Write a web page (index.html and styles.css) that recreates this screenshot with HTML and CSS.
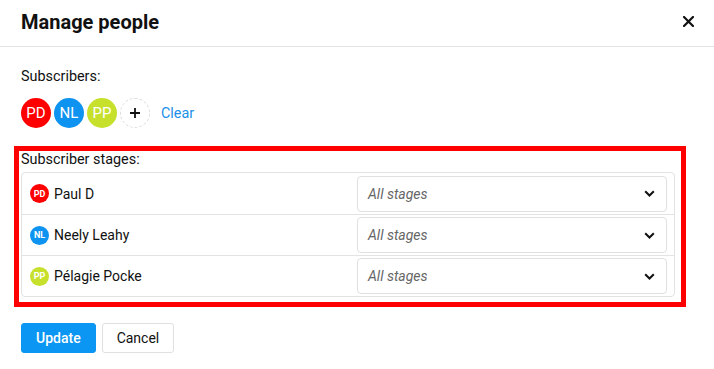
FILE: index.html
```html
<!DOCTYPE html>
<html lang="en">
<head>
    <meta charset="UTF-8">
    <meta name="viewport" content="width=device-width, initial-scale=1.0">
    <title>Manage people</title>
    <link rel="stylesheet" href="styles.css">
</head>
<body>
    <div class="modal">
        <div class="modal-header">
            <h1>Manage people</h1>
            <button class="close" aria-label="Close">
                <svg width="11" height="11" viewBox="0 0 11 11"><path d="M1 1L10 10M10 1L1 10" stroke="#111" stroke-width="2.2" stroke-linecap="square"/></svg>
            </button>
        </div>
        <div class="modal-body">
            <div class="field-label">Subscribers:</div>
            <div class="subscribers">
                <span class="avatar red">PD</span>
                <span class="avatar blue">NL</span>
                <span class="avatar green">PP</span>
                <span class="avatar add">
                    <svg width="12" height="12" viewBox="0 0 12 12"><path d="M6 1V11M1 6H11" stroke="#111" stroke-width="1.8"/></svg>
                </span>
                <a class="clear" href="#">Clear</a>
            </div>
            <div class="stages">
                <div class="stages-label">Subscriber stages:</div>
                <div class="stage-table">
                    <div class="stage-row">
                        <div class="person"><span class="avatar small red">PD</span>Paul D</div>
                        <div class="select">
                            <span>All stages</span>
                            <svg width="11" height="7" viewBox="0 0 11 7"><path d="M1.2 1.2L5.5 5.5L9.8 1.2" fill="none" stroke="#111" stroke-width="2"/></svg>
                        </div>
                    </div>
                    <div class="stage-row">
                        <div class="person"><span class="avatar small blue">NL</span>Neely Leahy</div>
                        <div class="select">
                            <span>All stages</span>
                            <svg width="11" height="7" viewBox="0 0 11 7"><path d="M1.2 1.2L5.5 5.5L9.8 1.2" fill="none" stroke="#111" stroke-width="2"/></svg>
                        </div>
                    </div>
                    <div class="stage-row">
                        <div class="person"><span class="avatar small green">PP</span>Pélagie Pocke</div>
                        <div class="select">
                            <span>All stages</span>
                            <svg width="11" height="7" viewBox="0 0 11 7"><path d="M1.2 1.2L5.5 5.5L9.8 1.2" fill="none" stroke="#111" stroke-width="2"/></svg>
                        </div>
                    </div>
                </div>
            </div>
            <div class="actions">
                <button class="btn primary">Update</button>
                <button class="btn">Cancel</button>
            </div>
        </div>
    </div>
</body>
</html>
```

FILE: styles.css
```css
body {
    margin: 0;
    font-family: Roboto, "Liberation Sans", sans-serif;
    font-size: 14px;
    color: #111;
    background: #fff;
}
.modal-header {
    height: 47px;
    border-bottom: 1px solid #e3e3e3;
    display: flex;
    align-items: center;
    justify-content: space-between;
    padding: 0 20px 0 21px;
    box-sizing: border-box;
}
.modal-header h1 {
    margin: 0;
    font-size: 20px;
    font-weight: 700;
    padding-bottom: 2px;
}
.close {
    border: none;
    background: none;
    padding: 0;
    width: 11px;
    height: 11px;
    margin-bottom: 3px;
    cursor: pointer;
}
.close svg {
    display: block;
}
.modal-body {
    padding: 21px 28px 0 14px;
}
.field-label {
    padding-left: 7px;
    line-height: 18px;
    font-size: 14.4px;
}
.subscribers {
    display: flex;
    align-items: center;
    gap: 3px;
    margin-top: 12px;
    padding-left: 7px;
}
.avatar {
    width: 30px;
    height: 30px;
    border-radius: 50%;
    display: inline-flex;
    align-items: center;
    justify-content: center;
    color: #fff;
    font-size: 15px;
    flex-shrink: 0;
}
.avatar.red { background: #fe0000; }
.avatar.blue { background: #0f93f0; }
.avatar.green { background: #c7e02c; }
.avatar.add {
    border: 1px dashed #dcdcdc;
    box-sizing: border-box;
}
.clear {
    color: #1a90e8;
    text-decoration: none;
    margin-left: 8px;
    font-size: 14.4px;
}
.stages {
    margin-top: 18px;
    border: 5px solid #ff0000;
    padding: 0 6px 5px 2px;
}
.stages-label {
    line-height: 17px;
    margin-bottom: 4px;
    font-size: 14.4px;
}
.stage-table {
    border: 1px solid #e3e3e3;
    border-radius: 4px;
}
.stage-row {
    display: flex;
    align-items: center;
    justify-content: space-between;
    height: 41px;
    padding: 0 7px 0 8px;
    box-sizing: border-box;
}
.stage-row + .stage-row {
    border-top: 1px solid #e3e3e3;
}
.person {
    display: flex;
    align-items: center;
    gap: 5px;
}
.avatar.small {
    width: 19px;
    height: 19px;
    font-size: 9px;
    font-weight: 700;
}
.select {
    width: 310px;
    height: 36px;
    border: 1px solid #e0e0e0;
    border-radius: 4px;
    box-sizing: border-box;
    display: flex;
    align-items: center;
    justify-content: space-between;
    padding: 0 11px 0 10px;
    color: #666;
    font-style: italic;
}
.select svg {
    display: block;
}
.actions {
    display: flex;
    gap: 6px;
    margin-top: 16px;
    padding-left: 7px;
}
.btn {
    height: 30px;
    padding: 0 14px;
    font-family: inherit;
    font-size: 14px;
    border: 1px solid #e0e0e0;
    border-radius: 3px;
    background: #fff;
    color: #111;
    cursor: pointer;
}
.btn.primary {
    background: #0a96f2;
    border-color: #0a96f2;
    color: #fff;
    font-weight: 500;
}
```
